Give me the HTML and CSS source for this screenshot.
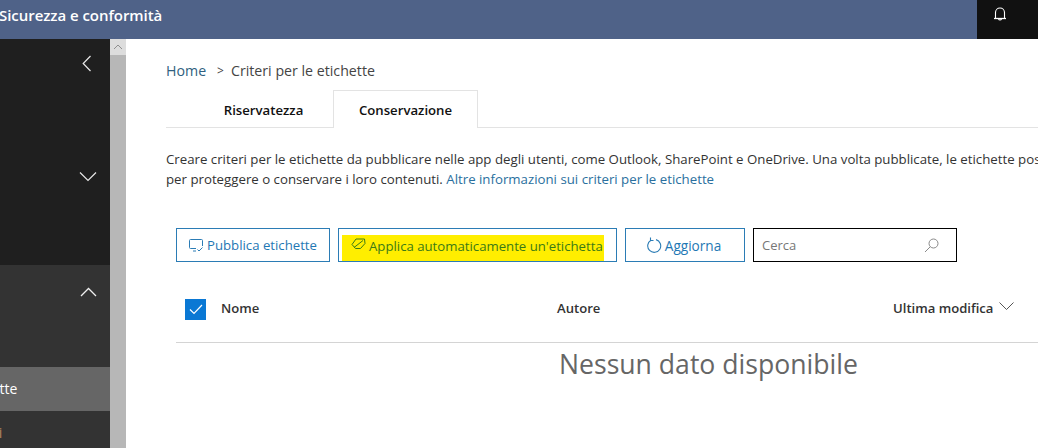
FILE: index.html
```html
<!DOCTYPE html>
<html lang="it">
<head>
<meta charset="utf-8">
<title>Criteri per le etichette</title>
<link rel="stylesheet" href="styles.css">
</head>
<body>
<header class="topbar">
  <div class="app-title">Sicurezza e conformità</div>
  <div class="bell-box">
    <svg class="bell" width="14" height="16" viewBox="0 0 14 16" fill="none" stroke="#fff" stroke-width="1.1"><path d="M2.5 12.5V6.5a4.5 4.5 0 0 1 9 0v6"/><path d="M1 12.5h12" stroke-width="1.3"/><path d="M5.5 13a1.6 1.6 0 0 0 3 0"/></svg>
  </div>
</header>
<div class="shell">
  <nav class="sidebar">
    <div class="nav-dark">
      <div class="nav-row nav-collapse"><svg width="10" height="17" viewBox="0 0 10 17" fill="none" stroke="#e8e8e8" stroke-width="1.2"><path d="M8.5 1L1.2 8.5l7.3 7.5"/></svg></div>
      <div class="nav-row nav-down"><svg width="18" height="11" viewBox="0 0 18 11" fill="none" stroke="#e8e8e8" stroke-width="1.2"><path d="M1 1.5l8 8 8-8"/></svg></div>
    </div>
    <div class="nav-light">
      <div class="nav-row nav-up"><svg width="17" height="10" viewBox="0 0 17 10" fill="none" stroke="#f0f0f0" stroke-width="1.3"><path d="M1 9l7.5-7.5L16 9"/></svg></div>
      <div class="nav-item active"><span class="nav-text">Etichette</span></div>
      <div class="nav-item orange"><span class="nav-text2">Criteri</span></div>
    </div>
  </nav>
  <div class="scrollbar">
    <div class="scroll-btn"><svg width="10" height="6" viewBox="0 0 10 6" fill="none" stroke="#8f8f8f"><path d="M1 5l4-4 4 4"/></svg></div>
  </div>
  <main class="main">
    <div class="breadcrumb"><a class="crumb-link">Home</a><span class="crumb-sep">&gt;</span><span>Criteri per le etichette</span></div>
    <div class="tabs">
      <div class="tab">Riservatezza</div>
      <div class="tab tab-active">Conservazione</div>
    </div>
    <p class="desc">Creare criteri per le etichette da pubblicare nelle app degli utenti, come Outlook, SharePoint e OneDrive. Una volta pubblicate, le etichette possono essere usate<br>per proteggere o conservare i loro contenuti. <a class="link">Altre informazioni sui criteri per le etichette</a></p>
    <div class="toolbar">
      <button class="btn btn-publish">
        <svg width="15" height="13" viewBox="0 0 15 13" fill="none" stroke="#2b7cb5"><path d="M7 9.5H1.5a1 1 0 0 1-1-1v-7a1 1 0 0 1 1-1h11a1 1 0 0 1 1 1V7"/><path d="M4 12h3M8.5 10.5l1.5 1.5 3.5-3.5"/></svg>
        <span>Pubblica etichette</span>
      </button>
      <button class="btn btn-apply">
        <span class="highlight">
          <svg class="tag-icon" width="15" height="12" viewBox="0 0 15 12" fill="none" stroke="#3b7a17"><path d="M5 1H13.5L14 5.5 9.5 10.5H4.5L1 6.5z"/><path d="M3 9.5L12 2.5"/></svg>
          <span>Applica automaticamente un'etichetta</span>
        </span>
      </button>
      <button class="btn btn-refresh">
        <svg width="15" height="16" viewBox="0 0 15 16" fill="none" stroke="#2b7cb5" stroke-width="1.1"><path d="M4 3.2a6.5 6.5 0 1 0 5-.6"/><path d="M3.5 .5v3h3"/></svg>
        <span>Aggiorna</span>
      </button>
      <div class="search">
        <span class="search-text">Cerca</span>
        <svg width="15" height="15" viewBox="0 0 15 15" fill="none" stroke="#8a8a8a"><circle cx="9.5" cy="5.5" r="4.5"/><path d="M6.3 8.7L1 14"/></svg>
      </div>
    </div>
    <div class="thead">
      <span class="check"><svg width="14" height="11" viewBox="0 0 14 11" fill="none" stroke="#fff" stroke-width="1.2"><path d="M1 5.5l4 4 8-8.5"/></svg></span>
      <span class="col col-name">Nome</span>
      <span class="col col-author">Autore</span>
      <span class="col col-date">Ultima modifica</span>
      <svg class="sort" width="15" height="8" viewBox="0 0 15 8" fill="none" stroke="#555"><path d="M.5 .5l7 7 7-7"/></svg>
    </div>
    <div class="empty">Nessun dato disponibile</div>
  </main>
</div>
</body>
</html>
```
FILE: styles.css
```css
* { box-sizing: border-box; }
html, body { margin: 0; height: 100%; overflow: hidden; background: #fff; }
body { font-family: "Open Sans", "Noto Sans", sans-serif; color: #333; width: 1038px; height: 448px; }

.topbar { height: 39px; background: #4f6288; display: flex; justify-content: space-between; }
.app-title { color: #fff; font-size: 15px; font-weight: 600; line-height: 31px; margin-left: -1px; letter-spacing: -.05px; }
.bell-box { width: 61px; background: #111; display: flex; justify-content: flex-start; padding: 6px 0 0 16px; }
.bell { display: block; }

.shell { display: flex; height: 409px; }
.sidebar { width: 110px; display: flex; flex-direction: column; overflow: hidden; }
.nav-dark { height: 226px; flex: none; background: #1f1f1f; }
.nav-light { flex: 1; min-height: 0; background: #333; }
.nav-row { display: flex; justify-content: flex-end; }
.nav-collapse { padding: 16px 18px 0 0; height: 132px; }
.nav-down { padding-right: 13px; }
.nav-up { height: 102px; padding: 22px 13px 0 0; }
.nav-item { height: 44px; font-size: 14px; color: #fff; line-height: 44px; white-space: nowrap; overflow: hidden; }
.nav-item.active { background: #666; }
.nav-item.orange { color: #b9865f; }
.nav-text { display: block; margin-left: -40px; }
.nav-text2 { display: block; margin-left: -38px; }

.scrollbar { width: 16px; background: #b7b7b7; }
.scroll-btn { height: 16px; background: #ddd; display: flex; align-items: center; justify-content: center; }

.main { flex: 1; min-width: 0; padding: 22px 0 0 40px; overflow: hidden; }
.breadcrumb { font-size: 14.2px; line-height: 20px; color: #444; display: flex; white-space: nowrap; }
.crumb-link { color: #2f5f80; }
.crumb-sep { margin: 0 7px 0 11px; font-size: 12px; }

.tabs { display: flex; height: 38px; margin-top: 9px; border-bottom: 1px solid #e3e3e3; }
.tab { width: 167px; padding-left: 28px; font-size: 13.2px; font-weight: 600; color: #111; text-align: center; line-height: 41px; }
.tab-active { width: 145px; height: 38px; padding-left: 0; background: #fff; border: 1px solid #e3e3e3; border-bottom: 0; line-height: 39px; }

.desc { margin: 21px 0 0; font-size: 13.25px; line-height: 20px; color: #333; white-space: nowrap; }
.link { color: #2a6f9e; }

.toolbar { display: flex; margin: 39px 0 0 10px; height: 34px; gap: 8px; }
.btn { height: 34px; padding: 0; background: #fff; border: 1px solid #2b7cb5; color: #1f78b4; font: inherit; font-size: 13.2px; display: flex; align-items: center; white-space: nowrap; }
.btn-publish { width: 154px; padding-left: 12px; gap: 3px; }
.btn-apply { width: 279px; padding: 6px 0 0 3px; align-items: flex-start; color: #3b7a17; }
.highlight { background: #ffee00; height: 26px; width: 262px; display: flex; align-items: center; gap: 3px; padding: 0 0 4px 9px; }
.tag-icon { margin-bottom: 4px; }
.btn-refresh { width: 120px; padding-right: 2px; justify-content: center; gap: 3px; font-size: 13.6px; }
.search { width: 204px; height: 34px; border: 1px solid #000; display: flex; align-items: center; justify-content: space-between; padding: 0 17px 0 8px; font-size: 13px; color: #777; }
.search-text { line-height: 1; }

.thead { display: flex; align-items: center; margin: 30px 0 0 10px; height: 51px; border-bottom: 1px solid #d4d4d4; width: 900px; padding-bottom: 18px; font-size: 13.1px; font-weight: 600; color: #333; }
.check { width: 21px; height: 21px; background: #0a78d4; display: flex; align-items: center; justify-content: center; margin-left: 9px; margin-top: 3px; }
.col { white-space: nowrap; }
.col-name { margin-left: 15px; width: 336px; }
.col-author { width: 336px; }
.sort { margin: -4px 0 0 6px; }

.empty { font-size: 26.6px; line-height: 34px; color: #666; margin: 4px 0 0 393px; white-space: nowrap; }
```
